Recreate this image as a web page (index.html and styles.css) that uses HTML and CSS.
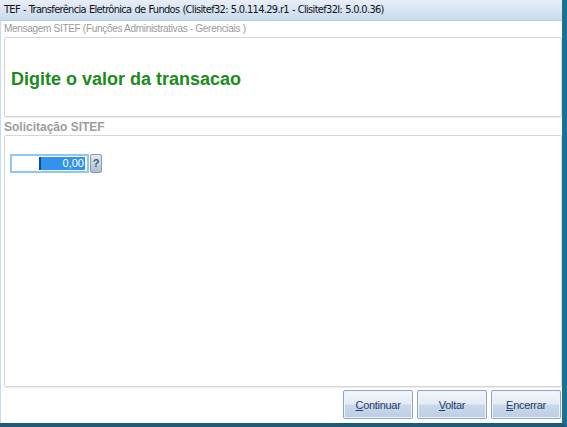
FILE: index.html
```html
<!DOCTYPE html>
<html lang="pt">
<head>
<meta charset="utf-8">
<title>TEF</title>
<link rel="stylesheet" href="styles.css">
</head>
<body>
<div class="window">
  <div class="titlebar">TEF - Transferência Eletrônica de Fundos (Clisitef32: 5.0.114.29.r1 - Clisitef32I: 5.0.0.36)</div>
  <div class="client">
    <div class="caption">Mensagem SITEF (Funções Administrativas - Gerenciais )</div>
    <div class="box msgbox">
      <div class="message">Digite o valor da transacao</div>
    </div>
    <div class="caption bold">Solicitação SITEF</div>
    <div class="box reqbox">
      <div class="field">
        <div class="input"><span class="sel">0,00</span></div>
        <div class="help">?</div>
      </div>
    </div>
    <div class="buttons">
      <button class="btn"><u>C</u>ontinuar</button>
      <button class="btn"><u>V</u>oltar</button>
      <button class="btn"><u>E</u>ncerrar</button>
    </div>
  </div>
</div>
</body>
</html>
```
FILE: styles.css
```css
html, body { margin: 0; padding: 0; }
body { width: 567px; height: 427px; overflow: hidden; background: #fff; font-family: "Liberation Sans", Arial, sans-serif; }
.window { width: 567px; height: 427px; display: flex; flex-direction: column; box-sizing: border-box; border-right: 5px solid #1f6f95; border-bottom: 4px solid #1d5a78; background: #fff; }
.titlebar { height: 20px; line-height: 20px; padding-left: 4px; font-family: "DejaVu Sans Condensed", "DejaVu Sans", sans-serif; font-size: 11px; letter-spacing: -0.68px; word-spacing: 0.5px; color: #111; background: linear-gradient(#e6eef8, #c9daee); white-space: nowrap; overflow: hidden; border-bottom: 1px solid #b8cce4; }
.client { flex: 1; display: flex; flex-direction: column; border-left: 1px solid #c6dcf0; padding: 0 0 0 2px; }
.caption { font-size: 10px; letter-spacing: -0.3px; color: #9a9a9a; height: 15px; line-height: 15px; padding-left: 1px; }
.caption.bold { font-size: 12px; letter-spacing: 0; font-weight: bold; height: 15px; line-height: 16px; color: #9c9c9c; }
.box { margin: 0 0 0 1px; width: 558px; border: 1px solid #d6d6d6; border-radius: 2px; box-sizing: border-box; box-shadow: 0 1px 0 #ececec; }
.msgbox { height: 80px; margin-top: 1px; display: flex; align-items: center; padding-left: 6px; margin-bottom: 2px; }
.message { color: #1a8c1a; font-weight: bold; font-size: 18px; margin-top: 4px; }
.reqbox { height: 252px; margin-top: 1px; padding: 18px 0 0 5px; }
.field { display: flex; gap: 1px; }
.input { width: 79px; height: 19px; box-sizing: border-box; border: 2px solid #8ec7f2; background: #fff; display: flex; justify-content: flex-end; align-items: stretch; padding: 1px 2px 1px 0; }
.sel { background: #3393ec; color: #fff; font-size: 11px; width: 46px; text-align: right; line-height: 13px; border-left: 2px solid #0a4a9c; box-sizing: border-box; padding-right: 1px; }
.help { width: 12px; height: 19px; box-sizing: border-box; border: 1px solid #8a9bb0; border-radius: 2px; background: linear-gradient(#e4eaf2, #aebdd0); color: #3a5a80; font-size: 11px; font-weight: bold; text-align: center; line-height: 17px; }
.buttons { display: flex; justify-content: flex-end; gap: 4px; padding: 3px 1px 0 0; }
.btn { width: 70px; height: 29px; border: 1px solid #8aa6c9; border-radius: 2px; background: linear-gradient(#f4f7fb 0%, #e2eaf4 48%, #cbd8ea 52%, #bccde3 100%); font-family: "Liberation Sans", Arial, sans-serif; font-size: 11px; letter-spacing: -0.3px; color: #24406c; padding: 0; box-shadow: inset 0 0 0 1px #eef3f9; }
.btn u { text-decoration: underline; }
```
